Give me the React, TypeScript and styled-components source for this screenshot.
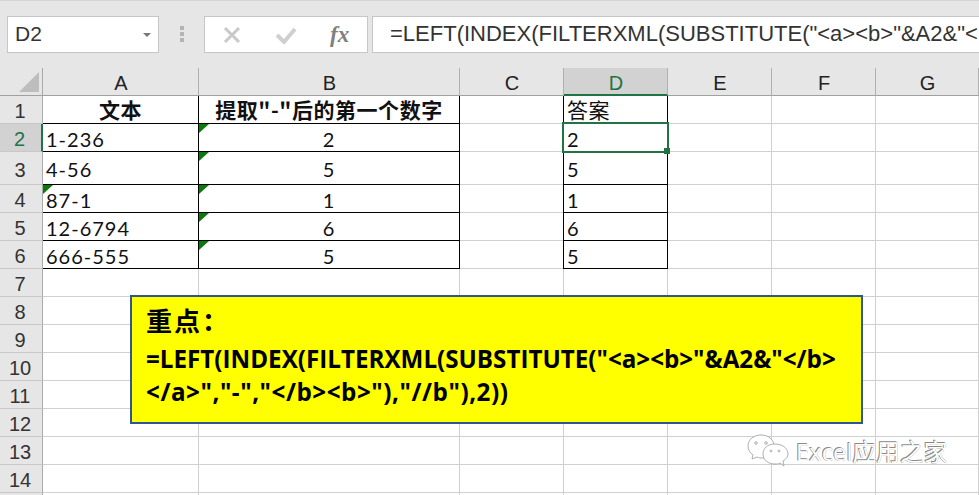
import React from "react";
import styled, { createGlobalStyle } from "styled-components";

const Global = createGlobalStyle`
  html, body { margin: 0; padding: 0; background: #fff; }
  body { width: 979px; height: 495px; overflow: hidden; font-family: "Liberation Sans", "Noto Sans CJK SC", sans-serif; }
`;

const Page = styled.div`
  position: relative;
  width: 979px;
  height: 495px;
  overflow: hidden;
`;

const Toolbar = styled.div`
  box-sizing: border-box;
  height: 68px;
  padding: 16px 0 16px 7px;
  background: #e6e6e6;
  border-top: 1px solid #d4d4d4;
  display: flex;
  align-items: stretch;
`;

const NameBox = styled.div`
  box-sizing: border-box;
  width: 152px;
  margin-top: -1px;
  height: 37px;
  background: #fff;
  border: 1px solid #c6c6c6;
  display: flex;
  align-items: center;
  justify-content: space-between;
  padding: 0 7px 2px;
  font-size: 21px;
  color: #333;
`;

const Caret = styled.span`
  width: 0;
  height: 0;
  margin-top: 2px;
  border-left: 4px solid transparent;
  border-right: 4px solid transparent;
  border-top: 4px solid #777;
`;

const Grip = styled.div`
  width: 45px;
  display: flex;
  flex-direction: column;
  align-items: center;
  justify-content: center;
  gap: 2px;
  margin-top: -1px;
  flex: none;
`;

const GripDot = styled.span`
  width: 4px;
  height: 4px;
  background: #b4b4b4;
`;

const FxBox = styled.div`
  box-sizing: border-box;
  width: 164px;
  height: 37px;
  margin-top: -1px;
  background: #fff;
  border: 1px solid #c6c6c6;
  display: flex;
  align-items: center;
  padding-left: 18px;
  gap: 34px;
  flex: none;
`;

const FxLabel = styled.span`
  font-family: "Liberation Serif", serif;
  font-style: italic;
  font-weight: 700;
  font-size: 23px;
  line-height: 1;
  color: #808080;
  margin-left: -1px;
`;

const FormulaBar = styled.div`
  box-sizing: border-box;
  flex: 1;
  height: 37px;
  margin-top: -1px;
  margin-left: 4px;
  background: #fff;
  border: 1px solid #c6c6c6;
  border-right: 0;
  padding-left: 17px;
  font-size: 22px;
  line-height: 33px;
  color: #333;
  white-space: nowrap;
  overflow: hidden;
`;

const Sheet = styled.div`
  display: grid;
  grid-template-columns: 43px 156px 261px 104px 104px 104px 104px 103px;
  grid-template-rows: 28px 28px 28px 33px repeat(3, 28px) repeat(9, 28px);
`;

const Corner = styled.div`
  box-sizing: border-box;
  background: #e6e6e6;
  border-right: 1px solid #aaa;
  border-bottom: 1px solid #a0a0a0;
  display: flex;
  align-items: flex-end;
  justify-content: flex-end;
  padding: 0 3px 3px 0;
`;

const ColHead = styled.div<{ $active?: boolean }>`
  box-sizing: border-box;
  background: ${(p) => (p.$active ? "#d2d2d2" : "#e6e6e6")};
  color: ${(p) => (p.$active ? "#217346" : "#222")};
  border-right: 1px solid #b0b0b0;
  border-bottom: ${(p) => (p.$active ? "2px solid #217346" : "1px solid #a0a0a0")};
  display: flex;
  align-items: center;
  justify-content: center;
  font-size: 20px;
  padding: 4px 0 0 1px;
`;

const RowHead = styled.div<{ $active?: boolean }>`
  box-sizing: border-box;
  background: ${(p) => (p.$active ? "#d2d2d2" : "#e6e6e6")};
  color: ${(p) => (p.$active ? "#217346" : "#333")};
  border-right: ${(p) => (p.$active ? "2px solid #217346" : "1px solid #aaa")};
  border-bottom: 1px solid #c8c8c8;
  display: flex;
  align-items: center;
  justify-content: center;
  padding: 4px 2px 0 0;
  font-family: "Liberation Sans", sans-serif;
  font-size: 20px;
`;

const Cell = styled.div<{ $box?: boolean; $left?: boolean; $center?: boolean }>`
  position: relative;
  box-sizing: border-box;
  background: #fff;
  border-right: 1px solid ${(p) => (p.$box ? "#000" : "#d0d0d0")};
  border-bottom: 1px solid ${(p) => (p.$box ? "#000" : "#d0d0d0")};
  ${(p) => (p.$left ? "box-shadow: -1px 0 0 #000;" : "")}
  display: flex;
  align-items: center;
  justify-content: ${(p) => (p.$center ? "center" : "flex-start")};
  padding: 2px 0 0 ${(p) => (p.$center ? "0" : "3px")};
  font-family: "Lato", "Noto Sans CJK SC", sans-serif;
  font-size: 20px;
  letter-spacing: 1px;
  color: #111;
  white-space: nowrap;
`;

const HeadText = styled.span<{ $plain?: boolean }>`
  font-family: "Noto Sans CJK SC", sans-serif;
  font-size: 21px;
  font-weight: ${(p) => (p.$plain ? 400 : 700)};
  letter-spacing: 0.55px;
  line-height: 1;
  margin-top: -2px;
`;

const Flag = styled.span`
  position: absolute;
  left: 0;
  top: 0;
  width: 0;
  height: 0;
  border-top: 9px solid #0a7a0a;
  border-right: 10px solid transparent;
`;

const Selection = styled.span`
  position: absolute;
  left: -2px;
  top: -2px;
  right: -2px;
  bottom: -2px;
  border: 2px solid #217346;
  pointer-events: none;
  z-index: 2;
`;

const Handle = styled.span`
  position: absolute;
  right: -3px;
  bottom: -3px;
  width: 6px;
  height: 6px;
  background: #217346;
`;

const Callout = styled.div`
  position: absolute;
  left: 130px;
  top: 295px;
  box-sizing: border-box;
  width: 733px;
  height: 129px;
  background: #ff0;
  border: 2px solid #2f5597;
  padding: 5px 0 0 14px;
  color: #000;
  font-family: "Open Sans", "Noto Sans CJK SC", sans-serif;
  font-weight: 700;
  font-size: 24.2px;
  line-height: 33px;
  white-space: nowrap;
  z-index: 3;
`;

const CalloutTitle = styled.div`
  font-family: "Noto Sans CJK SC", sans-serif;
  font-size: 26px;
  letter-spacing: 2px;
  line-height: 36px;
  height: 40px;
`;

const CalloutLine = styled.div<{ $spread?: boolean }>`
  letter-spacing: ${(p) => (p.$spread ? "0.55px" : "0")};
`;

const Watermark = styled.div`
  position: absolute;
  left: 747px;
  top: 433px;
  display: flex;
  align-items: center;
  gap: 7px;
  z-index: 3;
`;

const WatermarkText = styled.span`
  font-family: "Open Sans", "Noto Sans CJK SC", sans-serif;
  font-size: 23.8px;
  line-height: 32px;
  color: #fff;
  text-shadow: -1px -1px 0 #8a8a8a, 0 -0.5px 0 #8a8a8a, -0.5px 0 0 #777;
  margin-top: 1px;
`;

const cols = ["A", "B", "C", "D", "E", "F", "G"];
const data: [string, string, string, boolean][] = [
  ["1-236", "2", "2", false],
  ["4-56", "5", "5", false],
  ["87-1", "1", "1", true],
  ["12-6794", "6", "6", false],
  ["666-555", "5", "5", false],
];

function Blank({ n }: { n: number }) {
  return (
    <>
      {Array.from({ length: n }).map((_, i) => (
        <Cell key={i} />
      ))}
    </>
  );
}

export default function App() {
  return (
    <Page>
      <Global />
      <Toolbar>
        <NameBox>
          D2
          <Caret />
        </NameBox>
        <Grip>
          <GripDot />
          <GripDot />
          <GripDot />
        </Grip>
        <FxBox>
          <svg width="18" height="18" viewBox="0 0 18 18">
            <path d="M2 2 L16 16 M16 2 L2 16" stroke="#c9c9c9" strokeWidth="3" fill="none" />
          </svg>
          <svg width="22" height="18" viewBox="0 0 22 18">
            <path d="M2 9 L9 16 L20 3" stroke="#cfcfcf" strokeWidth="4" fill="none" />
          </svg>
          <FxLabel>fx</FxLabel>
        </FxBox>
        <FormulaBar>{'=LEFT(INDEX(FILTERXML(SUBSTITUTE("<a><b>"&A2&"<'}</FormulaBar>
      </Toolbar>
      <Sheet>
        <Corner>
          <svg width="20" height="20" viewBox="0 0 20 20">
            <path d="M0 20 L20 20 L20 0 Z" fill="#bdbdbd" />
          </svg>
        </Corner>
        {cols.map((c) => (
          <ColHead key={c} $active={c === "D"}>
            {c}
          </ColHead>
        ))}

        <RowHead>1</RowHead>
        <Cell $box $center>
          <HeadText>文本</HeadText>
        </Cell>
        <Cell $box $center>
          <HeadText>{'提取"-"后的第一个数字'}</HeadText>
        </Cell>
        <Cell />
        <Cell $box $left>
          <HeadText $plain>答案</HeadText>
        </Cell>
        <Blank n={3} />

        {data.map(([a, b, d, flagA], i) => (
          <React.Fragment key={a}>
            <RowHead $active={i === 0}>{i + 2}</RowHead>
            <Cell $box>
              {flagA && <Flag />}
              {a}
            </Cell>
            <Cell $box $center>
              <Flag />
              {b}
            </Cell>
            <Cell />
            <Cell $box $left>
              {d}
              {i === 0 && (
                <Selection>
                  <Handle />
                </Selection>
              )}
            </Cell>
            <Blank n={3} />
          </React.Fragment>
        ))}

        {[7, 8, 9, 10, 11, 12, 13, 14, 15].map((n) => (
          <React.Fragment key={n}>
            <RowHead>{n < 15 ? n : ""}</RowHead>
            <Blank n={7} />
          </React.Fragment>
        ))}
      </Sheet>

      <Callout>
        <CalloutTitle>重点：</CalloutTitle>
        <CalloutLine>{'=LEFT(INDEX(FILTERXML(SUBSTITUTE("<a><b>"&A2&"</b>'}</CalloutLine>
        <CalloutLine $spread>{'</a>","-","</b><b>"),"//b"),2))'}</CalloutLine>
      </Callout>

      <Watermark>
        <svg width="42" height="36" viewBox="0 0 42 36" fill="#fff" stroke="#9a9a9a" strokeWidth="0.8">
          <path d="M14 2 C6 2 1 7 1 13 C1 17 3 20 6 22 L5 26 L10 24 C12 25 14 25 16 25 C22 25 27 20 27 13 C27 7 22 2 14 2 Z" />
          <path d="M28 11 C21 11 16 15 16 21 C16 27 21 31 28 31 C30 31 31 31 33 30 L37 33 L36 28 C39 26 41 24 41 21 C41 15 35 11 28 11 Z" />
          <circle cx="9" cy="10" r="1.3" />
          <circle cx="19" cy="10" r="1.3" />
          <circle cx="24" cy="18" r="1" />
          <circle cx="32" cy="18" r="1" />
        </svg>
        <WatermarkText>Excel应用之家</WatermarkText>
      </Watermark>
    </Page>
  );
}
